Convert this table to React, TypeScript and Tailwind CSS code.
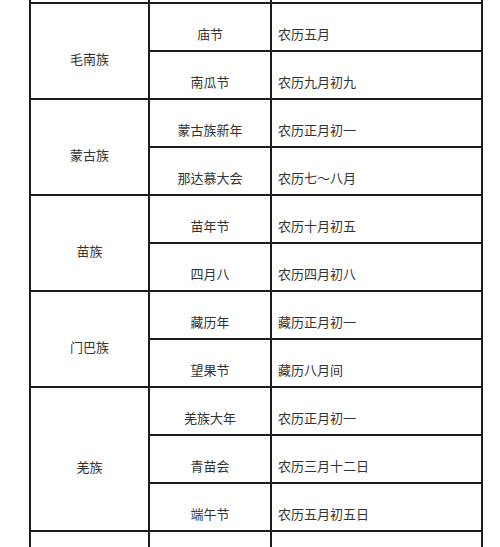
const groups = [
  {
    name: "毛南族",
    items: [
      { fest: "庙节", date: "农历五月" },
      { fest: "南瓜节", date: "农历九月初九" },
    ],
  },
  {
    name: "蒙古族",
    items: [
      { fest: "蒙古族新年", date: "农历正月初一" },
      { fest: "那达慕大会", date: "农历七～八月" },
    ],
  },
  {
    name: "苗族",
    items: [
      { fest: "苗年节", date: "农历十月初五" },
      { fest: "四月八", date: "农历四月初八" },
    ],
  },
  {
    name: "门巴族",
    items: [
      { fest: "藏历年", date: "藏历正月初一" },
      { fest: "望果节", date: "藏历八月间" },
    ],
  },
  {
    name: "羌族",
    items: [
      { fest: "羌族大年", date: "农历正月初一" },
      { fest: "青苗会", date: "农历三月十二日" },
      { fest: "端午节", date: "农历五月初五日" },
    ],
  },
];

const EdgeRow = ({ className }: { className: string }) => (
  <div className={`flex ${className}`}>
    <div className="w-[119px] border-l-2 border-[#1c1c1c]" />
    <div className="w-[122px] border-l-2 border-[#1c1c1c]" />
    <div className="flex-1 border-l-2 border-r-2 border-[#1c1c1c]" />
  </div>
);

export default function App() {
  return (
    <div
      className="h-[547px] w-[500px] overflow-hidden bg-white text-[13px] text-[#333]"
      style={{ fontFamily: '"Noto Sans CJK SC", "Noto Sans", sans-serif' }}
    >
      <div className="ml-[29px] w-[454px]">
        <EdgeRow className="h-[2px]" />
        {groups.map((g) => (
          <div key={g.name} className="flex">
            <div className="flex w-[119px] items-center justify-center border-l-2 border-t-2 border-[#1c1c1c] pt-[15px]">
              {g.name}
            </div>
            <div className="flex flex-1 flex-col">
              {g.items.map((it) => (
                <div key={it.fest} className="flex h-[48px] border-t-2 border-[#1c1c1c]">
                  <div className="flex w-[122px] items-center justify-center border-l-2 border-[#1c1c1c] pt-[14px]">
                    {it.fest}
                  </div>
                  <div className="flex flex-1 items-center border-l-2 border-r-2 border-[#1c1c1c] pl-[6px] pt-[14px]">
                    {it.date}
                  </div>
                </div>
              ))}
            </div>
          </div>
        ))}
        <EdgeRow className="h-[20px] border-t-2 border-[#1c1c1c]" />
      </div>
    </div>
  );
}
